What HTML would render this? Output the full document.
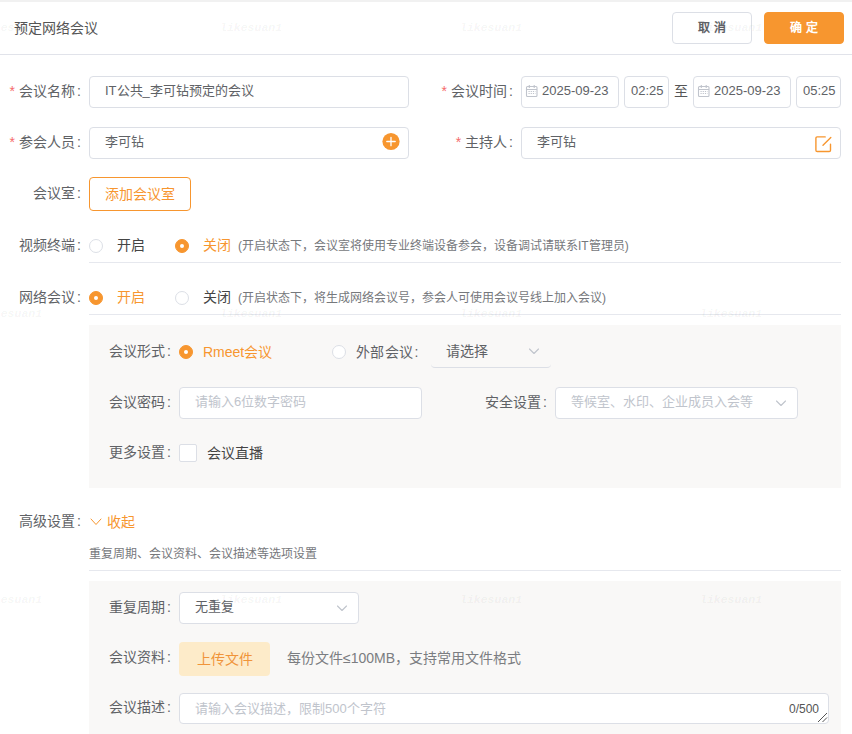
<!DOCTYPE html>
<html lang="zh-CN">
<head>
<meta charset="utf-8">
<title>预定网络会议</title>
<style>
*{box-sizing:border-box;margin:0;padding:0}
html,body{width:852px;height:734px;overflow:hidden;background:#fff}
body{position:relative;font-family:"Liberation Sans",sans-serif;font-size:14px;color:#606266}
.abs{position:absolute;white-space:nowrap}
.topbar{left:0;top:0;width:852px;height:2px;background:#f1f1f1}
.hdrline{left:0;top:54px;width:852px;height:1px;background:#e1e3ea}
.title{left:14px;top:18px;height:20px;line-height:20px;font-size:14px;color:#555}
.btn{height:32px;width:80px;border-radius:4px;font-size:12px;font-weight:bold;text-align:center;line-height:30px;top:12px}
.btn.cancel{left:672px;border:1px solid #dcdfe6;background:#fff;color:#606266}
.btn.ok{left:764px;border:1px solid #f7962f;background:#f7962f;color:#fff}
.lbl{height:32px;line-height:30px;font-size:14px;color:#606266;text-align:right}
.lbl i{font-style:normal;color:#f56c6c;margin-right:3.5px}
.lbl b{font-weight:normal;margin-left:1.5px;letter-spacing:0}
.lbl{letter-spacing:0.25px}
.inp{height:32px;line-height:28px;border:1px solid #dcdfe6;border-radius:4px;background:#fff;font-size:13px;color:#606266;padding-left:15px}
.ph{color:#c0c4cc}
.radio{width:14px;height:14px;border-radius:50%;border:1px solid #dcdfe6;background:#fff}
.radio.on{border-color:#f7962f;background:#f7962f}
.radio.on::after{content:"";position:absolute;left:4px;top:4px;width:4px;height:4px;border-radius:50%;background:#fff}
.rt{height:20px;line-height:20px;font-size:14px;color:#444}
.rt.on{color:#f7962f}
.hint{height:20px;line-height:20px;font-size:12px;color:#76787c}
.hl{left:89px;width:752px;height:1px;background:#e6e8ee}
.panel{left:89px;width:752px;background:#f9f8f7}
.wm{font-family:"Liberation Mono",monospace;font-style:italic;font-weight:bold;font-size:11.5px;color:rgba(0,0,0,0.055);z-index:9;height:14px;line-height:14px;letter-spacing:0}
</style>
</head>
<body>
<div class="abs topbar"></div>

<!-- watermarks -->
<div class="abs wm" style="left:-20px;top:21px">likesuan1</div>
<div class="abs wm" style="left:220px;top:21px">likesuan1</div>
<div class="abs wm" style="left:460px;top:21px">likesuan1</div>
<div class="abs wm" style="left:700px;top:21px">likesuan1</div>
<div class="abs wm" style="left:-20px;top:307px">likesuan1</div>
<div class="abs wm" style="left:220px;top:307px">likesuan1</div>
<div class="abs wm" style="left:460px;top:307px">likesuan1</div>
<div class="abs wm" style="left:700px;top:307px">likesuan1</div>

<div class="abs title">预定网络会议</div>
<div class="abs btn cancel">取 消</div>
<div class="abs btn ok">确 定</div>
<div class="abs hdrline"></div>

<!-- row 1 -->
<div class="abs lbl" style="left:0;width:81px;top:76px"><i>*</i>会议名称<b>:</b></div>
<div class="abs inp" style="left:89px;top:76px;width:320px">IT公共_李可钻预定的会议</div>
<div class="abs lbl" style="left:430px;width:83px;top:76px"><i>*</i>会议时间<b>:</b></div>
<div class="abs inp" style="left:521px;top:76px;width:98px;padding-left:20px">
  <svg class="abs" style="left:3px;top:7px" width="14" height="14" viewBox="0 0 14 14" fill="none" stroke="#c0c4cc" stroke-width="1.1"><rect x="1.5" y="2.5" width="10.5" height="10" rx="1"/><path d="M1.5 5.5h10.5M4.3 1v3M9.2 1v3"/><path d="M3.5 7.5h7M3.5 9.5h7" stroke-dasharray="1.2 1"/></svg>
  2025-09-23</div>
<div class="abs inp" style="left:624px;top:76px;width:45px;padding-left:6px">02:25</div>
<div class="abs" style="left:674px;top:76px;height:32px;line-height:30px;font-size:14px;color:#555">至</div>
<div class="abs inp" style="left:693px;top:76px;width:98px;padding-left:20px">
  <svg class="abs" style="left:3px;top:7px" width="14" height="14" viewBox="0 0 14 14" fill="none" stroke="#c0c4cc" stroke-width="1.1"><rect x="1.5" y="2.5" width="10.5" height="10" rx="1"/><path d="M1.5 5.5h10.5M4.3 1v3M9.2 1v3"/><path d="M3.5 7.5h7M3.5 9.5h7" stroke-dasharray="1.2 1"/></svg>
  2025-09-23</div>
<div class="abs inp" style="left:796px;top:76px;width:45px;padding-left:6px">05:25</div>

<!-- row 2 -->
<div class="abs lbl" style="left:0;width:81px;top:127px"><i>*</i>参会人员<b>:</b></div>
<div class="abs inp" style="left:89px;top:127px;width:320px">李可钻</div>
<svg class="abs" style="left:382px;top:132px" width="18" height="19" viewBox="0 0 18 19"><circle cx="9" cy="9.5" r="8.6" fill="#f7962f"/><path d="M9 5.3v8.4M4.8 9.5h8.4" stroke="#fff" stroke-width="1.3" stroke-linecap="round"/></svg>
<div class="abs lbl" style="left:430px;width:83px;top:127px"><i>*</i>主持人<b>:</b></div>
<div class="abs inp" style="left:521px;top:127px;width:320px">李可钻</div>
<svg class="abs" style="left:815px;top:136px" width="17" height="17" viewBox="0 0 17 17" fill="none" stroke="#f7962f" stroke-width="1.4" stroke-linecap="round" stroke-linejoin="round"><path d="M10.2 0.9H2.2Q0.9 0.9 0.9 2.2V14.2Q0.9 15.5 2.2 15.5H14.2Q15.5 15.5 15.5 14.2V8.2"/><path d="M15.8 1.6L8 9.3"/></svg>

<!-- row 3 -->
<div class="abs lbl" style="left:0;width:81px;top:178px">会议室<b>:</b></div>
<div class="abs" style="left:89px;top:177px;width:102px;height:34px;border:1px solid #f7962f;border-radius:4px;background:#fff;color:#f7962f;font-size:14px;line-height:32px;text-align:center">添加会议室</div>

<!-- row 4 -->
<div class="abs lbl" style="left:0;width:81px;top:230px">视频终端<b>:</b></div>
<div class="abs radio" style="left:89px;top:239px"></div>
<div class="abs rt" style="left:117px;top:235px">开启</div>
<div class="abs radio on" style="left:175px;top:239px"></div>
<div class="abs rt on" style="left:203px;top:235px">关闭</div>
<div class="abs hint" style="left:238px;top:236px">(开启状态下，会议室将使用专业终端设备参会，设备调试请联系IT管理员)</div>
<div class="abs hl" style="top:262px"></div>

<!-- row 5 -->
<div class="abs lbl" style="left:0;width:81px;top:282px">网络会议<b>:</b></div>
<div class="abs radio on" style="left:89px;top:291px"></div>
<div class="abs rt on" style="left:117px;top:287px">开启</div>
<div class="abs radio" style="left:175px;top:291px"></div>
<div class="abs rt" style="left:203px;top:287px">关闭</div>
<div class="abs hint" style="left:238px;top:288px">(开启状态下，将生成网络会议号，参会人可使用会议号线上加入会议)</div>
<div class="abs hl" style="top:314px"></div>

<!-- panel 1 -->
<div class="abs panel" style="top:325px;height:163px"></div>
<div class="abs lbl" style="left:89px;width:82px;top:336px">会议形式<b>:</b></div>
<div class="abs radio on" style="left:179px;top:345px"></div>
<div class="abs rt on" style="left:203px;top:342px">Rmeet会议</div>
<div class="abs radio" style="left:332px;top:345px"></div>
<div class="abs rt" style="left:356px;top:342px;color:#606266;letter-spacing:0.25px">外部会议<span style="margin-left:1.5px">:</span></div>
<div class="abs" style="left:431px;top:336px;width:120px;height:32px;border-bottom:1px solid #dcdfe6;border-radius:4px;line-height:31px;font-size:14px;color:#606266;padding-left:15px">请选择</div>
<svg class="abs" style="left:528px;top:347px" width="12" height="8" viewBox="0 0 12 8" fill="none" stroke="#c0c4cc" stroke-width="1.1" stroke-linecap="round" stroke-linejoin="round"><path d="M1.5 2l4.5 4.5 4.5-4.5"/></svg>

<div class="abs lbl" style="left:89px;width:82px;top:387px">会议密码<b>:</b></div>
<div class="abs inp ph" style="left:179px;top:387px;width:243px">请输入6位数字密码</div>
<div class="abs lbl" style="left:465px;width:82px;top:387px">安全设置<b>:</b></div>
<div class="abs inp ph" style="left:555px;top:387px;width:243px">等候室、水印、企业成员入会等</div>
<svg class="abs" style="left:775px;top:399px" width="12" height="8" viewBox="0 0 12 8" fill="none" stroke="#c0c4cc" stroke-width="1.1" stroke-linecap="round" stroke-linejoin="round"><path d="M1.5 2l4.5 4.5 4.5-4.5"/></svg>

<div class="abs lbl" style="left:89px;width:82px;top:437px">更多设置<b>:</b></div>
<div class="abs" style="left:179px;top:444px;width:18px;height:18px;border:1px solid #dcdfe6;border-radius:2px;background:#fff"></div>
<div class="abs rt" style="left:207px;top:443px">会议直播</div>

<!-- advanced -->
<div class="abs lbl" style="left:0;width:81px;top:506px">高级设置<b>:</b></div>
<svg class="abs" style="left:90px;top:518px" width="12" height="8" viewBox="0 0 12 8" fill="none" stroke="#f7962f" stroke-width="1" stroke-linecap="round" stroke-linejoin="round"><path d="M1 1l5 5.5 5-5.5"/></svg>
<div class="abs rt on" style="left:107px;top:512px">收起</div>
<div class="abs hint" style="left:89px;top:544px">重复周期、会议资料、会议描述等选项设置</div>
<div class="abs hl" style="top:570px"></div>

<!-- panel 2 -->
<div class="abs panel" style="top:581px;height:153px"></div>
<div class="abs wm" style="left:-20px;top:593px">likesuan1</div>
<div class="abs wm" style="left:460px;top:593px">likesuan1</div>
<div class="abs wm" style="left:700px;top:593px">likesuan1</div>
<div class="abs lbl" style="left:89px;width:82px;top:592px">重复周期<b>:</b></div>
<div class="abs inp" style="left:179px;top:592px;width:180px">无重复</div>
<div class="abs wm" style="left:220px;top:593px">likesuan1</div>
<svg class="abs" style="left:336px;top:604px" width="12" height="8" viewBox="0 0 12 8" fill="none" stroke="#c0c4cc" stroke-width="1.1" stroke-linecap="round" stroke-linejoin="round"><path d="M1.5 2l4.5 4.5 4.5-4.5"/></svg>

<div class="abs lbl" style="left:89px;width:82px;top:642px">会议资料<b>:</b></div>
<div class="abs" style="left:179px;top:642px;width:91px;height:34px;border-radius:4px;background:#fdebc9;color:#f0943a;font-size:14px;line-height:34px;text-align:center">上传文件</div>
<div class="abs rt" style="left:287px;top:648px;color:#7b7d81">每份文件≤100MB，支持常用文件格式</div>

<div class="abs lbl" style="left:89px;width:82px;top:692px">会议描述<b>:</b></div>
<div class="abs inp ph" style="left:179px;top:693px;width:650px;height:31px;line-height:29px">请输入会议描述，限制500个字符</div>
<div class="abs" style="left:789px;top:699px;height:20px;line-height:20px;font-size:12px;color:#555">0/500</div>
<svg class="abs" style="left:817px;top:712px" width="11" height="11" viewBox="0 0 11 11" stroke="#555" stroke-width="1" fill="none"><path d="M10 1L1 10M10 5.5L5.5 10"/></svg>
</body>
</html>
